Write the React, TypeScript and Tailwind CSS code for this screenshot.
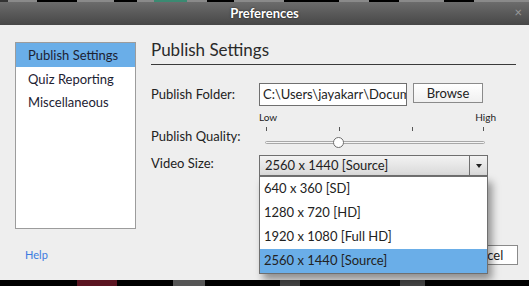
const sizes = ["640 x 360 [SD]", "1280 x 720 [HD]", "1920 x 1080 [Full HD]", "2560 x 1440 [Source]"];

function QualitySlider() {
  return (
    <div className="w-[237px]">
      <div className="flex h-[12px] justify-between text-[10px] leading-[12px] text-[#222]">
        <span>Low</span>
        <span>High</span>
      </div>
      <svg width="237" height="27" viewBox="0 0 237 27" className="block">
        {[7, 80, 153, 224].map((x) => (
          <line key={x} x1={x + 0.5} y1="4" x2={x + 0.5} y2="8" stroke="#555" strokeWidth="1" />
        ))}
        <rect x="6.5" y="18.5" width="219" height="2" rx="1" fill="#f4f4f4" stroke="#a8a8a8" />
        <circle cx="79.5" cy="19.5" r="5" fill="#fff" stroke="#6e6e6e" strokeWidth="1" />
      </svg>
    </div>
  );
}

function VideoSizeSelect() {
  return (
    <div className="relative w-[229px]">
      <div className="flex h-[21px] border border-[#6f6f6f] bg-gradient-to-b from-[#f3f3f3] to-[#d9d9d9]">
        <span className="flex-1 pl-[5px] text-[13px] leading-[19px] text-[#222]">2560 x 1440 [Source]</span>
        <span className="flex w-[18px] items-center justify-center border-l border-[#6f6f6f]">
          <span className="h-0 w-0 border-x-[3.5px] border-t-[4px] border-x-transparent border-t-[#222]" />
        </span>
      </div>
      <div className="absolute left-0 top-full z-10 w-full border border-[#6f6f6f] bg-white shadow-[4px_6px_8px_rgba(0,0,0,0.4)]">
        {sizes.map((s, i) => (
          <div
            key={s}
            className={`h-[24px] pl-[4px] text-[13px] leading-[22px] text-[#222] ${i === 3 ? "bg-[#6aaee8]" : ""}`}
          >
            {s}
          </div>
        ))}
      </div>
    </div>
  );
}

export default function App() {
  return (
    <div className="flex h-[286px] w-[529px] flex-col overflow-hidden bg-black font-['Lato',sans-serif]">
      <div className="flex h-[2px]">
        <span className="w-[8px] bg-[#333]" />
        <span className="w-[29px] bg-[#8a8a8a]" />
        <span className="w-[40px] bg-black" />
        <span className="w-[37px] bg-[#8a8a8a]" />
        <span className="w-[23px] bg-black" />
        <span className="w-[17px] bg-[#8a8a8a]" />
        <span className="w-[33px] bg-[#3b8a72]" />
        <span className="w-[20px] bg-[#8a8a8a]" />
        <span className="w-[27px] bg-black" />
        <span className="w-[50px] bg-[#8a8a8a]" />
        <span className="w-[55px] bg-black" />
        <span className="w-[30px] bg-[#8a8a8a]" />
        <span className="w-[30px] bg-black" />
        <span className="w-[45px] bg-[#8a8a8a]" />
        <span className="w-[30px] bg-black" />
        <span className="flex-1 bg-[#8a8a8a]" />
      </div>

      <div className="relative flex h-[23px] items-center justify-center bg-gradient-to-b from-[#6c6c6c] to-[#474747]">
        <span className="text-[13px] font-bold text-white [text-shadow:0_0_2px_rgba(0,0,0,0.8)]">Preferences</span>
        <span className="absolute right-[7px] top-[3px] text-[13px] leading-[14px] text-[#9a9a9a]">×</span>
      </div>

      <div className="flex h-[255px] flex-col bg-[#eeeeee]">
        <div className="flex h-[204px] pl-[15px] pr-[13px]">
          <div className="mt-[17px] h-[187px] w-[121px] border border-[#9c9c9c] bg-white">
            <div className="h-[24px] bg-[#6aaee8] pl-[12px] text-[13px] leading-[24px] text-[#1d2233]">Publish Settings</div>
            <div className="h-[24px] pl-[12px] text-[13px] leading-[24px] text-[#1d2233]">Quiz Reporting</div>
            <div className="h-[24px] pl-[12px] text-[13px] leading-[22px] text-[#1d2233]">Miscellaneous</div>
          </div>

          <div className="ml-[15px] flex-1 pt-[14px]">
            <div className="h-[26px] border-b border-[#3a3a3a] text-[17px] leading-[22px] text-[#2a2a2a]">Publish Settings</div>

            <div className="mt-[18px] flex h-[23px] items-center">
              <span className="w-[108px] text-[13px] text-[#222]">Publish Folder:</span>
              <div className="h-[23px] w-[148px] overflow-hidden whitespace-nowrap border border-[#6f6f6f] bg-white pl-[3px] text-[13px] leading-[21px] text-[#222]">
                C:\Users\jayakarr\Docum
              </div>
              <button className="ml-[6px] h-[20px] w-[70px] self-start border border-[#8a8a8a] bg-gradient-to-b from-[#ffffff] to-[#f0f0f0] text-[13px] leading-[18px] text-[#222]">
                Browse
              </button>
            </div>

            <div className="mt-[5px] flex">
              <span className="flex w-[108px] items-end pb-[4px] text-[13px] text-[#222]">Publish Quality:</span>
              <QualitySlider />
            </div>

            <div className="mt-[5px] flex">
              <span className="w-[108px] text-[13px] leading-[17px] text-[#222]">Video Size:</span>
              <VideoSizeSelect />
            </div>
          </div>
        </div>

        <div className="mt-[16px] flex h-[20px] items-center justify-between pl-[25px] pr-[11px]">
          <span className="text-[11px] text-[#3b7be0]">Help</span>
          <div className="flex gap-[8px]">
            <button className="h-[20px] w-[68px] border border-[#8a8a8a] bg-white text-[13px] text-[#222]">OK</button>
            <button className="h-[20px] w-[68px] border border-[#8a8a8a] bg-white text-[13px] text-[#222]">Cancel</button>
          </div>
        </div>
      </div>

      <div className="flex h-[6px]">
        <span className="w-[77px] bg-black" />
        <span className="w-[40px] bg-[#5a1420]" />
        <span className="w-[56px] bg-black" />
        <span className="w-[32px] bg-[#555]" />
        <span className="w-[75px] bg-black" />
        <span className="w-[20px] bg-[#444]" />
        <span className="w-[100px] bg-black" />
        <span className="w-[25px] bg-[#444]" />
        <span className="flex-1 bg-black" />
      </div>
    </div>
  );
}
